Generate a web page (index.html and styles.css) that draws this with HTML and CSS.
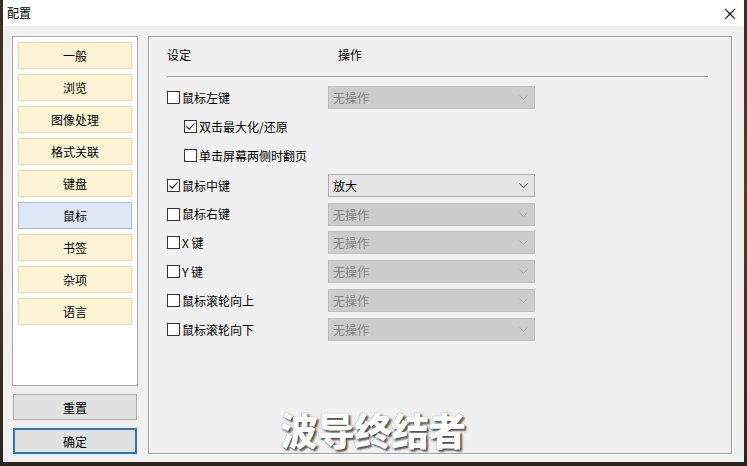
FILE: index.html
```html
<!DOCTYPE html>
<html lang="zh-CN">
<head>
<meta charset="utf-8">
<title>配置</title>
<link rel="stylesheet" href="styles.css">
</head>
<body>
<div class="window">
  <div class="titlebar">
    <span class="title">配置</span>
    <svg class="close" width="12" height="12" viewBox="0 0 12 12"><path d="M1 1 L11 11 M11 1 L1 11" stroke="#111" stroke-width="1.1" fill="none"/></svg>
  </div>
  <div class="content">
    <div class="sidebar">
      <div class="list">
        <div class="navbtn">一般</div>
        <div class="navbtn">浏览</div>
        <div class="navbtn">图像处理</div>
        <div class="navbtn">格式关联</div>
        <div class="navbtn">键盘</div>
        <div class="navbtn selected">鼠标</div>
        <div class="navbtn">书签</div>
        <div class="navbtn">杂项</div>
        <div class="navbtn">语言</div>
      </div>
      <div class="btn">重置</div>
      <div class="btn default">确定</div>
    </div>
    <div class="panel">
      <div class="header">
        <span class="h-set">设定</span>
        <span class="h-op">操作</span>
      </div>
      <div class="sep"></div>
      <div class="rows">
        <div class="row">
          <label class="chk"><span class="box"></span><span>鼠标左键</span></label>
          <div class="combo disabled"><span>无操作</span><svg class="chev" width="9" height="5" viewBox="0 0 9 5"><path d="M0.5 0.5 L4.5 4.5 L8.5 0.5" stroke="#b0b0b0" fill="none"/></svg></div>
        </div>
        <div class="row sub">
          <label class="chk"><span class="box"><svg width="11" height="11" viewBox="0 0 11 11"><path d="M1.5 5.5 L4.2 8.2 L9.5 2.5" stroke="#222" stroke-width="1.1" fill="none"/></svg></span><span>双击最大化/还原</span></label>
        </div>
        <div class="row sub">
          <label class="chk"><span class="box"></span><span>单击屏幕两侧时翻页</span></label>
        </div>
        <div class="row mid">
          <label class="chk"><span class="box"><svg width="11" height="11" viewBox="0 0 11 11"><path d="M1.5 5.5 L4.2 8.2 L9.5 2.5" stroke="#222" stroke-width="1.1" fill="none"/></svg></span><span>鼠标中键</span></label>
          <div class="combo"><span>放大</span><svg class="chev" width="9" height="5" viewBox="0 0 9 5"><path d="M0.5 0.5 L4.5 4.5 L8.5 0.5" stroke="#333" fill="none"/></svg></div>
        </div>
        <div class="row">
          <label class="chk"><span class="box"></span><span>鼠标右键</span></label>
          <div class="combo disabled"><span>无操作</span><svg class="chev" width="9" height="5" viewBox="0 0 9 5"><path d="M0.5 0.5 L4.5 4.5 L8.5 0.5" stroke="#b0b0b0" fill="none"/></svg></div>
        </div>
        <div class="row">
          <label class="chk"><span class="box"></span><span>X 键</span></label>
          <div class="combo disabled"><span>无操作</span><svg class="chev" width="9" height="5" viewBox="0 0 9 5"><path d="M0.5 0.5 L4.5 4.5 L8.5 0.5" stroke="#b0b0b0" fill="none"/></svg></div>
        </div>
        <div class="row">
          <label class="chk"><span class="box"></span><span>Y 键</span></label>
          <div class="combo disabled"><span>无操作</span><svg class="chev" width="9" height="5" viewBox="0 0 9 5"><path d="M0.5 0.5 L4.5 4.5 L8.5 0.5" stroke="#b0b0b0" fill="none"/></svg></div>
        </div>
        <div class="row">
          <label class="chk"><span class="box"></span><span>鼠标滚轮向上</span></label>
          <div class="combo disabled"><span>无操作</span><svg class="chev" width="9" height="5" viewBox="0 0 9 5"><path d="M0.5 0.5 L4.5 4.5 L8.5 0.5" stroke="#b0b0b0" fill="none"/></svg></div>
        </div>
        <div class="row">
          <label class="chk"><span class="box"></span><span>鼠标滚轮向下</span></label>
          <div class="combo disabled"><span>无操作</span><svg class="chev" width="9" height="5" viewBox="0 0 9 5"><path d="M0.5 0.5 L4.5 4.5 L8.5 0.5" stroke="#b0b0b0" fill="none"/></svg></div>
        </div>
      </div>
    </div>
  </div>
  <div class="watermark">波导终结者</div>
</div>
</body>
</html>
```
FILE: styles.css
```css
* { box-sizing: border-box; }
html, body { margin: 0; padding: 0; }
body {
  width: 747px;
  height: 466px;
  overflow: hidden;
  background: linear-gradient(180deg, #3b2c26 0%, #5a3a22 40%, #2e221e 100%);
  font-family: "Noto Sans CJK SC", "Microsoft YaHei", sans-serif;
  font-size: 12px;
  color: #000;
}
.window {
  position: relative;
  margin-left: 3px;
  width: 741px;
  height: 462px;
  background: #f0f0f0;
  display: flex;
  flex-direction: column;
}
.titlebar {
  height: 26px;
  background: #fff;
  display: flex;
  align-items: center;
  justify-content: space-between;
  padding: 0 8px 0 4px;
}
.title { font-size: 12px; line-height: 16px; }
.close { margin-top: 1px; }
.content {
  display: flex;
  padding: 10px 0 0 9px;
  gap: 10px;
}
.sidebar {
  width: 126px;
  display: flex;
  flex-direction: column;
}
.list {
  height: 350px;
  background: #fff;
  border: 1px solid #ababab;
  padding: 5px 5px 0 5px;
  display: flex;
  flex-direction: column;
  gap: 5px;
}
.navbtn {
  height: 27px;
  background: #fdf4d5;
  border: 1px solid #eadcab;
  display: flex;
  align-items: center;
  justify-content: center;
  font-size: 12px;
}
.navbtn.selected {
  background: #dfe7f7;
  border-color: #a7b8d9;
}
.btn {
  margin: 8px 1px 0 1px;
  height: 26px;
  background: #e1e1e1;
  border: 1px solid #adadad;
  display: flex;
  align-items: center;
  justify-content: center;
}
.btn.default {
  border: 2px solid #2877bd;
}
.panel {
  width: 584px;
  height: 418px;
  border: 1px solid #a0a0a0;
  box-shadow: 1px 1px 0 #fff, inset 1px 1px 0 #fff;
  padding: 10px 23px 0 18px;
}
.header {
  display: flex;
  height: 16px;
  line-height: 16px;
}
.h-set { width: 171px; }
.sep {
  margin-top: 13px;
  height: 2px;
  border-top: 1px solid #a0a0a0;
  border-bottom: 1px solid #fff;
}
.rows {
  margin-top: 5px;
  display: flex;
  flex-direction: column;
}
.row {
  height: 29px;
  display: flex;
  align-items: center;
}
.row.mid { margin-top: 1px; height: 29px; }
.row.mid + .row { height: 28px; }
.row.sub { padding-left: 17px; }
.chk {
  width: 161px;
  display: flex;
  align-items: center;
  gap: 2px;
  line-height: 16px;
}
.box {
  width: 13px;
  height: 13px;
  border: 1px solid #333;
  background: #fff;
  display: flex;
  align-items: center;
  justify-content: center;
  flex: none;
}
.combo {
  width: 207px;
  height: 23px;
  border: 1px solid #adadad;
  background: #e5e5e5;
  display: flex;
  align-items: center;
  justify-content: space-between;
  padding: 0 6px 0 4px;
}
.combo.disabled {
  background: #cccccc;
  border-color: #bfbfbf;
  color: #838383;
}
.watermark {
  position: absolute;
  left: 277px;
  top: 407px;
  font-size: 38px;
  font-weight: 900;
  color: #fff;
  letter-spacing: -1px;
  line-height: 44px;
  text-shadow: 2px 2px 2px rgba(0,0,0,0.65), 0 0 1px rgba(0,0,0,0.5);
}
```
